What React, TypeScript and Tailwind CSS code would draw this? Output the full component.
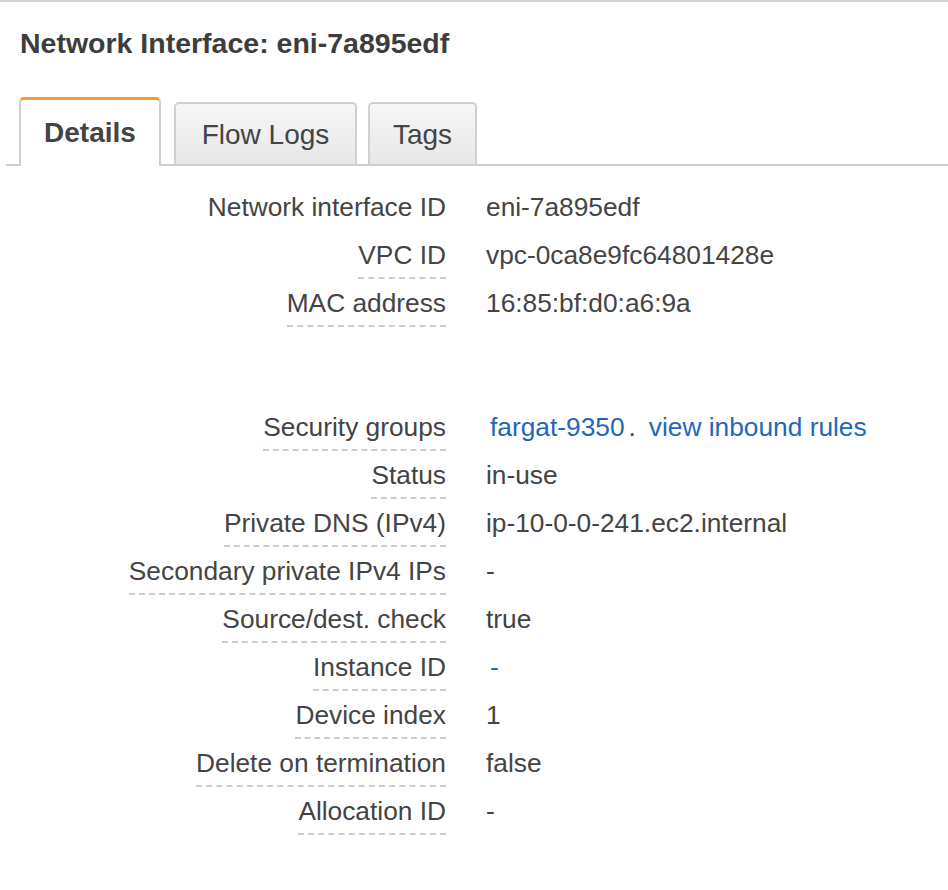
import React from 'react';

type Row = {
  label: string;
  value: React.ReactNode;
  underline?: boolean;
};

const linkCls = 'text-[#1f67b9]';

const topRows: Row[] = [
  { label: 'Network interface ID', value: 'eni-7a895edf', underline: false },
  { label: 'VPC ID', value: 'vpc-0ca8e9fc64801428e' },
  { label: 'MAC address', value: '16:85:bf:d0:a6:9a' },
];

const bottomRows: Row[] = [
  {
    label: 'Security groups',
    value: (
      <span className="ml-[4px]">
        <a className={linkCls}>fargat-9350</a>
        <span className="ml-[4px]">.</span>
        <a className={`${linkCls} ml-[13px]`}>view inbound rules</a>
      </span>
    ),
  },
  { label: 'Status', value: 'in-use' },
  { label: 'Private DNS (IPv4)', value: 'ip-10-0-0-241.ec2.internal' },
  { label: 'Secondary private IPv4 IPs', value: '-' },
  { label: 'Source/dest. check', value: 'true' },
  { label: 'Instance ID', value: <a className={`${linkCls} ml-[4px]`}>-</a> },
  { label: 'Device index', value: '1' },
  { label: 'Delete on termination', value: 'false' },
  { label: 'Allocation ID', value: '-' },
];

function DetailRow({ row }: { row: Row }) {
  const underline = row.underline !== false;
  return (
    <div className="flex h-[48px] items-start">
      <div className="flex w-[446px] shrink-0 justify-end">
        <span
          className={
            underline
              ? 'block leading-[30px] pb-[7px] border-b-2 border-dashed border-[#cdcdcd]'
              : 'block leading-[30px]'
          }
        >
          {row.label}
        </span>
      </div>
      <div className="pl-[40px] leading-[30px] whitespace-nowrap">{row.value}</div>
    </div>
  );
}

export default function App() {
  return (
    <div
      className="w-[948px] h-[890px] bg-white text-[#444] overflow-hidden"
      style={{ fontFamily: '"Liberation Sans", Arial, sans-serif' }}
    >
      <div className="h-[2px] bg-[#d3d3d3]" />

      <h1 className="mt-[25px] ml-[20px] text-[28.5px] leading-[32px] font-bold text-[#3d3d3d]">
        Network Interface: eni-7a895edf
      </h1>

      {/* tabs */}
      <div className="mt-[38px] ml-[6px] flex items-end border-b-2 border-[#cfcfcf] pl-[13px]">
        <div className="-mb-[2px] flex h-[69px] w-[142px] items-center justify-center rounded-t-[5px] border-x-2 border-t-[3px] border-x-[#d0d0d0] border-t-[#f59a2c] bg-white text-[28px] font-bold leading-[32px] text-[#444]">
          Details
        </div>
        <div className="ml-[13px] flex h-[62px] w-[183px] items-center justify-center rounded-t-[5px] border-x-2 border-t-2 border-[#d0d0d0] bg-linear-to-b from-[#f7f7f7] to-[#e7e7e7] pt-[1px] text-[28px] leading-[32px] text-[#444]">
          Flow Logs
        </div>
        <div className="ml-[11px] flex h-[62px] w-[109px] items-center justify-center rounded-t-[5px] border-x-2 border-t-2 border-[#d0d0d0] bg-linear-to-b from-[#f7f7f7] to-[#e7e7e7] pt-[1px] text-[28px] leading-[32px] text-[#444]">
          Tags
        </div>
      </div>

      {/* details */}
      <div className="pt-[26px] text-[26.3px]">
        {topRows.map((r) => (
          <DetailRow key={r.label} row={r} />
        ))}
        <div className="h-[76px]" />
        {bottomRows.map((r) => (
          <DetailRow key={r.label} row={r} />
        ))}
      </div>
    </div>
  );
}
